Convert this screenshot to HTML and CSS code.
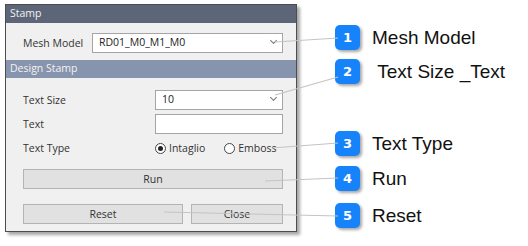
FILE: index.html
```html
<!DOCTYPE html>
<html lang="en">
  <head>
    <meta charset="UTF-8" />
    <title>Stamp</title>
    <link rel="stylesheet" href="styles.css">
  </head>
  <body>
    <div class="page">
      <div class="panel">
        <div class="bar bar-dark">Stamp</div>
        <div class="section">
          <div class="row row-mesh">
            <span class="label">Mesh Model</span>
            <div class="select select-wide">RD01_M0_M1_M0<span class="chev"></span></div>
          </div>
        </div>
        <div class="bar bar-light">Design Stamp</div>
        <div class="section section-design">
          <div class="row">
            <span class="label">Text Size</span>
            <div class="select field">10<span class="chev"></span></div>
          </div>
          <div class="row">
            <span class="label">Text</span>
            <div class="input field"></div>
          </div>
          <div class="row">
            <span class="label">Text Type</span>
            <div class="radios">
              <span class="radio"><span class="dot checked"></span>Intaglio</span>
              <span class="radio"><span class="dot"></span>Emboss</span>
            </div>
          </div>
          <div class="btn btn-run">Run</div>
          <div class="btn-row">
            <div class="btn btn-reset">Reset</div>
            <div class="btn btn-close">Close</div>
          </div>
        </div>
      </div>

      <ul class="callouts">
        <li class="callout c1"><span class="badge">1</span>Mesh Model</li>
        <li class="callout c2"><span class="badge">2</span>&nbsp;Text Size _Text</li>
        <li class="callout c3"><span class="badge">3</span>Text Type</li>
        <li class="callout c4"><span class="badge">4</span>Run</li>
        <li class="callout c5"><span class="badge">5</span>Reset</li>
      </ul>

      <!-- leader lines from controls to badges -->
      <svg class="leaders" width="528" height="246" viewBox="0 0 528 246">
        <g stroke="#c4c4c4" stroke-width="1.2" fill="none">
          <line x1="275" y1="42" x2="338" y2="38" />
          <line x1="275" y1="95" x2="338" y2="77" />
          <line x1="272" y1="148" x2="338" y2="143" />
          <line x1="265" y1="181" x2="338" y2="178" />
          <line x1="164" y1="212" x2="338" y2="216" />
        </g>
      </svg>
    </div>
  </body>
</html>
```

FILE: styles.css
```css
html,
body {
  margin: 0;
  padding: 0;
  background: white;
}
.page {
  position: relative;
  width: 528px;
  height: 246px;
  display: flex;
  align-items: flex-start;
}
.panel {
  margin: 4px 0 0 5px;
  width: 290px;
  height: 226px;
  background: #f0f0f0;
  border: 1px solid #4d4d4d;
  box-shadow: 3px 3px 3px rgba(0, 0, 0, 0.35);
  font-family: "Open Sans", "DejaVu Sans", sans-serif;
  font-size: 10.5px;
  color: #333;
  display: flex;
  flex-direction: column;
}
.bar {
  height: 18px;
  line-height: 17px;
  padding-left: 4px;
  color: #f2f2f2;
}
.bar-dark {
  background: #5d6679;
}
.bar-light {
  background: #8794ad;
}
.section {
  padding: 10px 13px 0 17px;
  height: 27px;
}
.row {
  display: flex;
  align-items: center;
  height: 20px;
  margin-bottom: 4px;
}
.label {
  flex: 1;
}
.row-mesh .label {
  flex: 0 0 69px;
}
.select,
.input {
  position: relative;
  box-sizing: border-box;
  height: 20px;
  background: white;
  border: 1px solid #a5a5a5;
  padding-left: 6px;
  line-height: 17px;
  color: #222;
}
.select-wide {
  width: 192px;
}
.field {
  width: 128px;
}
.chev {
  position: absolute;
  right: 6px;
  top: 4px;
  width: 4px;
  height: 4px;
  border-right: 1.3px solid #777;
  border-bottom: 1.3px solid #777;
  transform: rotate(45deg);
}
.section-design {
  padding: 12px 13px 0 17px;
  height: auto;
}
.radios {
  width: 128px;
  display: flex;
  gap: 19px;
  padding-left: 2px;
}
.radio {
  display: flex;
  align-items: center;
  gap: 3px;
}
.dot {
  box-sizing: border-box;
  width: 11px;
  height: 11px;
  border: 1px solid #444;
  border-radius: 50%;
  background: white;
  position: relative;
}
.dot.checked::after {
  content: "";
  position: absolute;
  left: 2px;
  top: 2px;
  width: 5px;
  height: 5px;
  border-radius: 50%;
  background: #222;
}
.btn {
  box-sizing: border-box;
  height: 20px;
  line-height: 18px;
  text-align: center;
  background: #e1e1e1;
  border: 1px solid #b4b4b4;
  color: #333;
}
.btn-run {
  margin-top: 11px;
  width: 260px;
}
.btn-row {
  display: flex;
  justify-content: space-between;
  margin-top: 15px;
  width: 260px;
}
.btn-reset {
  width: 160px;
}
.btn-close {
  width: 92px;
}
.callouts {
  list-style: none;
  margin: 0;
  padding: 25px 0 0 38px;
  font-family: "Liberation Sans", Arial, sans-serif;
  font-size: 19px;
  color: #111;
}
.callout {
  display: flex;
  align-items: center;
  height: 25px;
}
.c2 { margin-top: 9px; }
.c3 { margin-top: 47px; }
.c4 { margin-top: 10px; }
.c5 { margin-top: 12px; }
.badge {
  width: 25px;
  height: 25px;
  margin-right: 12px;
  border-radius: 5px;
  background: #1683fb;
  box-shadow: 2px 2px 3px rgba(0, 0, 0, 0.35);
  color: white;
  font-family: "DejaVu Sans", sans-serif;
  font-weight: bold;
  font-size: 13px;
  line-height: 25px;
  text-align: center;
}
.leaders {
  position: absolute;
  left: 0;
  top: 0;
  pointer-events: none;
}
```
